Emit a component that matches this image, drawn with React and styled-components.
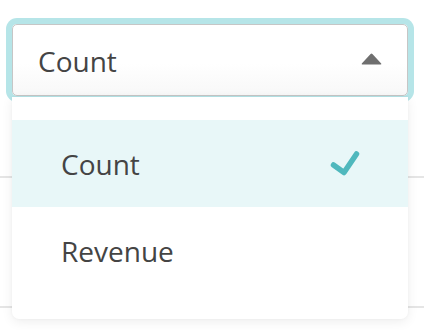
import React from "react";
import styled, { createGlobalStyle } from "styled-components";

const Global = createGlobalStyle`
  html, body { margin: 0; padding: 0; background: #fff; }
  body { font-family: "Open Sans", "Liberation Sans", sans-serif; }
`;

const Page = styled.div`
  position: relative;
  width: 424px;
  height: 330px;
  overflow: hidden;
  background: #fff;
`;

const Header = styled.div`
  height: 103px;
  padding: 24px 16px 0 12px;
  box-sizing: border-box;
`;

const SelectWrap = styled.div`
  position: relative;
  width: 396px;
`;

const Control = styled.div`
  box-sizing: border-box;
  height: 72px;
  border: 1px solid #c6c6c6;
  border-radius: 5px;
  background: linear-gradient(#ffffff 55%, #f8f8f8);
  box-shadow: 0 0 0 6px #b6e5e8;
  display: flex;
  align-items: center;
  justify-content: space-between;
  padding: 0 25px 0 25px;
  font-size: 28px;
  color: #444;
`;

const Value = styled.span`
  line-height: 1;
  margin-top: 1px;
`;

const Arrow = styled.svg`
  width: 21px;
  height: 12px;
  display: block;
  margin-top: -3px;
`;

const Menu = styled.ul`
  position: absolute;
  z-index: 2;
  top: 73px;
  left: 0;
  right: 0;
  margin: 0;
  padding: 23px 0 25px;
  list-style: none;
  background: #fff;
  border-radius: 0 0 7px 7px;
  box-shadow: 0 3px 12px rgba(0, 0, 0, 0.07), 0 0 3px rgba(0, 0, 0, 0.04);
`;

const Option = styled.li`
  height: 87px;
  display: flex;
  align-items: center;
  justify-content: space-between;
  padding: 0 47px 0 49px;
  font-size: 28px;
  color: #444;
  background: ${(p) => (p.$selected ? "#e8f7f8" : "transparent")};
`;

const Check = styled.svg`
  width: 32px;
  height: 26px;
  display: block;
`;

const Table = styled.div``;

const Row = styled.div`
  height: ${(p) => p.$h}px;
  border-bottom: 2px solid #e5e5e5;
  box-sizing: border-box;
`;

export default function App() {
  return (
    <>
      <Global />
      <Page>
        <Header>
          <SelectWrap>
            <Control>
              <Value>Count</Value>
              <Arrow viewBox="0 0 21 12">
                <path
                  d="M9.6 1.1 Q10.5 0 11.4 1.1 L20.2 10.6 Q20.8 11.6 19.6 11.6 L1.4 11.6 Q0.2 11.6 0.8 10.6 Z"
                  fill="#6f6f6f"
                />
              </Arrow>
            </Control>
            <Menu>
              <Option $selected>
                <span>Count</span>
                <Check viewBox="0 0 32 26">
                  <polyline
                    points="4.5,14 15,21.5 27.5,3"
                    fill="none"
                    stroke="#4fb8bd"
                    strokeWidth="5.5"
                    strokeLinecap="round"
                    strokeLinejoin="round"
                  />
                </Check>
              </Option>
              <Option>
                <span>Revenue</span>
              </Option>
            </Menu>
          </SelectWrap>
        </Header>
        <Table>
          <Row $h={75} />
          <Row $h={130} />
        </Table>
      </Page>
    </>
  );
}
